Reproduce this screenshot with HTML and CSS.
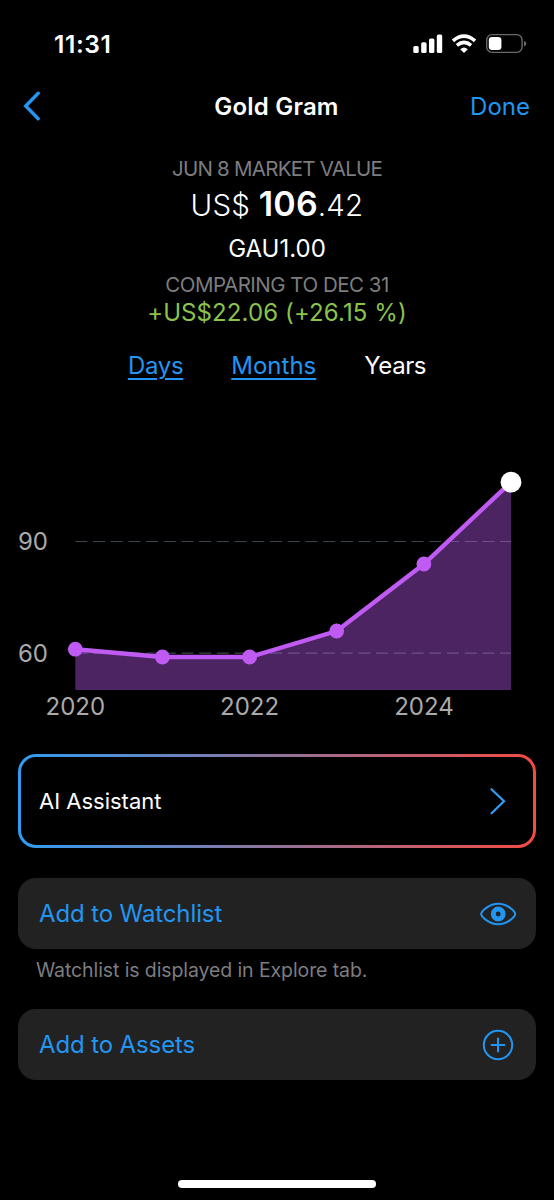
FILE: index.html
```html
<!DOCTYPE html>
<html lang="en">
<head>
    <meta charset="UTF-8">
    <meta name="viewport" content="width=device-width, initial-scale=1.0">
    <title>Gold Gram</title>
    <link rel="stylesheet" href="styles.css">
</head>
<body>
    <div class="screen">
        <div class="status-bar">
            <span class="time">11:31</span>
            <svg class="status-icons" width="114" height="22" viewBox="0 0 114 22">
                <g fill="#fff">
                    <rect x="0.3" y="13" width="5.4" height="7" rx="1.6"/>
                    <rect x="8.2" y="9.3" width="5.4" height="10.7" rx="1.6"/>
                    <rect x="16" y="5.5" width="5.4" height="14.5" rx="1.6"/>
                    <rect x="23.8" y="1.4" width="5.4" height="18.6" rx="1.6"/>
                    <path d="M51 20 L47.2 16.3 Q51 12.9 54.8 16.3 Z"/>
                </g>
                <g fill="none" stroke="#fff" stroke-width="3.5">
                    <path d="M40 7.8 Q51 -1.6 62 7.8"/>
                    <path d="M43.9 12.4 Q51 6.4 58.1 12.4"/>
                </g>
                <rect x="73.7" y="1.6" width="35.4" height="17.8" rx="5.4" fill="none" stroke="#69696b" stroke-width="1.4"/>
                <rect x="75.8" y="4" width="12.6" height="13" rx="3.2" fill="#fff"/>
                <path d="M111 7.7 Q113.3 8.6 113.3 10.6 Q113.3 12.6 111 13.4 Z" fill="#69696b"/>
            </svg>
        </div>

        <div class="nav">
            <svg class="back" width="18" height="30" viewBox="0 0 18 30">
                <path d="M15.2 2.3 L2.7 15 L15.2 27.7"/>
            </svg>
            <h1>Gold Gram</h1>
            <span class="done">Done</span>
        </div>

        <div class="summary">
            <div class="label">JUN 8 MARKET VALUE</div>
            <div class="price">US$ <b>106</b>.42</div>
            <div class="amount">GAU1.00</div>
            <div class="label compare">COMPARING TO DEC 31</div>
            <div class="change">+US$22.06 (+26.15 %)</div>
        </div>

        <div class="tabs">
            <a class="tab days">Days</a>
            <a class="tab months">Months</a>
            <span class="tab active">Years</span>
        </div>

        <svg class="chart" width="554" height="330" viewBox="0 400 554 330">
            <g class="grid">
                <path d="M75.3 541.5 H511"/>
                <path d="M75.3 653.2 H511"/>
            </g>
            <path class="area" d="M75.3 649.2 L162.4 657 L249.6 657 L336.7 631 L423.9 564 L511 482.2 V690 H75.3 Z"/>
            <path class="line" d="M75.3 649.2 L162.4 657 L249.6 657 L336.7 631 L423.9 564 L511 482.2"/>
            <g class="dots">
                <circle cx="75.3" cy="649.2" r="7.4"/>
                <circle cx="162.4" cy="657" r="7.4"/>
                <circle cx="249.6" cy="657" r="7.4"/>
                <circle cx="336.7" cy="631" r="7.4"/>
                <circle cx="423.9" cy="564" r="7.4"/>
                <circle class="current" cx="511" cy="482.2" r="10.4"/>
            </g>
            <g class="axis">
                <text x="33" y="550">90</text>
                <text x="33" y="662">60</text>
                <text x="75.3" y="715">2020</text>
                <text x="249.6" y="715">2022</text>
                <text x="423.9" y="715">2024</text>
            </g>
        </svg>

        <div class="assistant">
            <span>AI Assistant</span>
            <svg width="20" height="30" viewBox="0 0 20 30">
                <path d="M3.5 3.2 L16 15.2 L3.5 27.2"/>
            </svg>
        </div>

        <div class="row">
            <span class="watch">Add to Watchlist</span>
            <svg width="38" height="26" viewBox="0 0 38 26">
                <path d="M2.2 13 C2.2 10.2 10 2.8 19.2 2.8 C28.4 2.8 36.2 10.2 36.2 13 C36.2 15.8 28.4 23.2 19.2 23.2 C10 23.2 2.2 15.8 2.2 13 Z"/>
                <circle class="iris" cx="19.2" cy="13" r="4.9"/>
            </svg>
        </div>
        <p class="hint">Watchlist is displayed in Explore tab.</p>

        <div class="row">
            <span class="assets">Add to Assets</span>
            <svg width="38" height="32" viewBox="0 0 38 32">
                <circle cx="19" cy="16" r="14.2"/>
                <path d="M12.6 16 H25.4 M19 9.6 V22.4"/>
            </svg>
        </div>

        <div class="home-indicator"></div>
    </div>
</body>
</html>
```

FILE: styles.css
```css
* {
    box-sizing: border-box;
}

body {
    margin: 0;
    background-color: #000;
    color: #fff;
    font-family: Inter, "Liberation Sans", sans-serif;
    font-size: 24px;
}

.screen {
    display: flex;
    flex-direction: column;
    width: 554px;
    height: 1200px;
    overflow: hidden;
}

.status-bar {
    display: flex;
    justify-content: space-between;
    align-items: center;
    height: 87px;
    padding: 0 27px 0 54px;
}

.time {
    font-size: 24.5px;
    font-weight: 600;
    letter-spacing: 0.6px;
}

.nav {
    display: grid;
    grid-template-columns: 100px 1fr 100px;
    align-items: center;
    height: 38px;
    padding: 0 24px 0 23px;
}

.back {
    fill: none;
    stroke: #2196f3;
    stroke-width: 3.4;
    stroke-linecap: round;
}

h1 {
    margin: 0;
    font-size: 24px;
    font-weight: 600;
    text-align: center;
    letter-spacing: 0.2px;
}

.done {
    color: #2196f3;
    text-align: right;
}

.summary {
    display: flex;
    flex-direction: column;
    align-items: center;
    padding-top: 32px;
}

.label {
    color: #7d7d7f;
    font-size: 20.5px;
    line-height: 24px;
    letter-spacing: -0.75px;
}

.price {
    margin-top: 3px;
    font-size: 29.5px;
    font-weight: 300;
    line-height: 40px;
    letter-spacing: 0.2px;
}

.price b {
    font-size: 34px;
    font-weight: 600;
}

.amount {
    margin-top: 10px;
    line-height: 28px;
}

.compare {
    margin-top: 10px;
    letter-spacing: -0.5px;
}

.change {
    margin-top: 2px;
    color: #8bc34a;
    line-height: 28px;
    letter-spacing: 0.1px;
}

.tabs {
    display: flex;
    justify-content: center;
    gap: 48px;
    margin-top: 24px;
    height: 49px;
    line-height: 30px;
}

.tab {
    color: #2196f3;
    text-decoration: underline;
    text-decoration-thickness: 1.5px;
    text-underline-offset: 4px;
}

.days {
    letter-spacing: -0.3px;
}

.active {
    color: #fff;
    text-decoration: none;
    letter-spacing: -0.4px;
}

.chart {
    flex: none;
}

.grid path {
    stroke: #37474f;
    stroke-width: 1.2;
    stroke-dasharray: 12 5.7;
}

.area {
    fill: #bf5af2;
    fill-opacity: 0.4;
}

.line {
    fill: none;
    stroke: #bf5af2;
    stroke-width: 4.4;
}

.dots {
    fill: #bf5af2;
}

.current {
    fill: #fff;
}

.axis {
    fill: #aaa;
    font-size: 24px;
    text-anchor: middle;
}

/* blue to red outline */
.assistant {
    display: flex;
    justify-content: space-between;
    align-items: center;
    height: 94px;
    margin: 24px 18px 0;
    padding: 0 25px 0 18px;
    border: 3px solid transparent;
    border-radius: 18px;
    background: linear-gradient(#000, #000) padding-box, linear-gradient(to right, #2f9df4, #f44b42) border-box;
    font-size: 22px;
}

.assistant svg {
    fill: none;
    stroke: #2f9df4;
    stroke-width: 2.2;
    stroke-linecap: round;
}

.row {
    display: flex;
    justify-content: space-between;
    align-items: center;
    height: 71px;
    margin: 30px 18px 0;
    padding: 0 19px 0 21px;
    border-radius: 18px;
    background-color: #222;
    color: #2196f3;
    letter-spacing: -0.12px;
}

.row svg {
    fill: none;
    stroke: #2196f3;
    stroke-width: 2;
    stroke-linecap: round;
}

.row .iris {
    stroke-width: 5;
}

.hint {
    margin: 8px 36px 0;
    color: #7d7d7f;
    font-size: 19.5px;
    line-height: 26px;
    letter-spacing: -0.1px;
}

.hint + .row {
    margin-top: 26px;
}

.home-indicator {
    width: 198px;
    height: 8px;
    margin: auto auto 12px;
    border-radius: 4px;
    background-color: #fff;
}
```
